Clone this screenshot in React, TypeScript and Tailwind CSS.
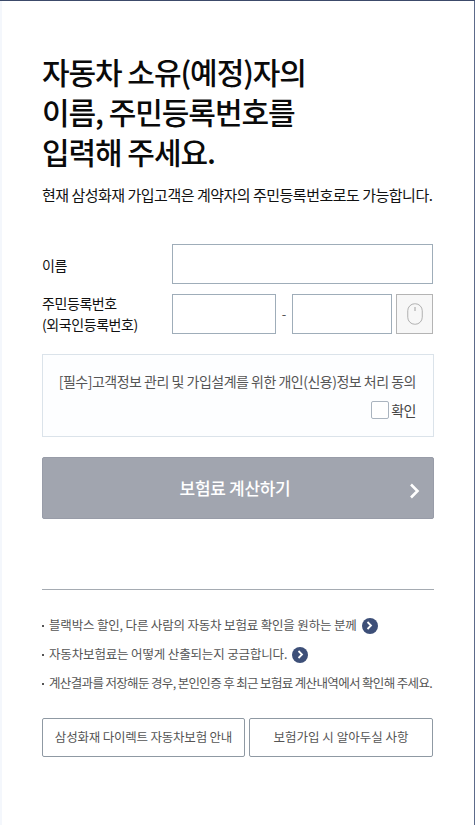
const notes = [
  { text: '블랙박스 할인, 다른 사람의 자동차 보험료 확인을 원하는 분께', link: true, cls: 'tracking-[-0.17px]' },
  { text: '자동차보험료는 어떻게 산출되는지 궁금합니다.', link: true, cls: 'tracking-[-0.15px]' },
  { text: '계산결과를 저장해둔 경우, 본인인증 후 최근 보험료 계산내역에서 확인해 주세요.', link: false, cls: 'tracking-[-0.65px]' },
];

const App = () => {
  return (
    <div className="w-[475px] h-[825px] overflow-hidden bg-[#f4f7fc] pl-[2px] border-t border-[#3c4a6a] font-['Noto_Sans_CJK_KR','Noto_Sans',sans-serif]">
      <div className="h-full bg-white border-r border-[#5c6a8a] px-[40px] pt-[50px]">
        {/* 제목 */}
        <h1 className="text-[30px] leading-[40px] font-medium tracking-[-1.05px] text-[#0a0a0a]">
          자동차 소유(예정)자의<br />이름, 주민등록번호를<br />입력해 주세요.
        </h1>
        <p className="mt-[12px] text-[15px] leading-[24px] tracking-[-0.5px] text-[#111] whitespace-nowrap">
          현재 삼성화재 가입고객은 계약자의 주민등록번호로도 가능합니다.
        </p>

        {/* 입력 폼 */}
        <div className="mt-[37px] flex items-center h-[40px]">
          <label className="w-[130px] mt-[2px] text-[14px] tracking-[-0.3px] text-[#111]">이름</label>
          <input className="w-[261px] h-[40px] border border-[#9fadb9] bg-white" />
        </div>
        <div className="mt-[10px] flex items-center h-[40px]">
          <label className="w-[130px] -mt-[1px] text-[14px] leading-[21px] tracking-[-0.42px] text-[#111] whitespace-nowrap">
            주민등록번호<br />(외국인등록번호)
          </label>
          <input className="w-[104px] h-[40px] border border-[#9fadb9] bg-white" />
          <span className="w-[16px] text-center text-[13px] text-[#555]">-</span>
          <input className="w-[100px] h-[40px] border border-[#9fadb9] bg-white" />
          <button className="ml-[4px] w-[37px] h-[40px] border border-[#b4b4b4] bg-[#f7f7f7] flex items-center justify-center">
            <svg width="16" height="22" viewBox="0 0 16 22" fill="none">
              <rect x="0.75" y="0.75" width="14.5" height="20.5" rx="7" stroke="#b0b0b0" strokeWidth="1" />
              <path d="M8 4v4" stroke="#a0a0a0" strokeWidth="1" />
            </svg>
          </button>
        </div>

        {/* 동의 */}
        <div className="mt-[20px] w-[392px] h-[83px] border border-[#dbe3ea] bg-[#fdfeff] pr-[17px] pt-[14px] flex flex-col items-end">
          <p className="text-[14px] leading-[24px] tracking-[-0.5px] text-[#555] whitespace-nowrap">
            [필수]고객정보 관리 및 가입설계를 위한 개인(신용)정보 처리 동의
          </p>
          <label className="mt-[7px] flex items-center gap-[2px] text-[14px] leading-[20px] tracking-[-0.5px] text-[#444]">
            <input type="checkbox" className="appearance-none w-[18px] h-[18px] rounded-[2px] border border-[#aab4bf] bg-white" />
            확인
          </label>
        </div>

        {/* 계산 버튼 */}
        <button className="mt-[20px] relative w-[392px] h-[62px] rounded-[2px] border border-[#989ca8] bg-[#a1a5af] pr-[6px] text-white text-[17px] font-medium tracking-[-0.3px] flex items-center justify-center">
          보험료 계산하기
          <svg width="11" height="16" viewBox="0 0 11 16" fill="none" className="absolute right-[13px] top-[25px]">
            <path d="M2 1.5 L8.5 8 L2 14.5" stroke="#fff" strokeWidth="2.6" />
          </svg>
        </button>

        <div className="mt-[70px] w-[392px] h-px bg-[#a5abb2]" />

        {/* 안내 */}
        <ul className="mt-[25px] w-[392px] space-y-[8px]">
          {notes.map((n) => (
            <li key={n.text} className={`flex items-center h-[21px] text-[12.5px] text-[#555] whitespace-nowrap ${n.cls}`}>
              <span className="shrink-0 w-[2px] h-[2px] mr-[5px] bg-[#555]" />
              {n.text}
              {n.link && (
                <span className="ml-[5px] w-[16px] h-[16px] rounded-full bg-[#3d4f78] flex items-center justify-center">
                  <svg width="7" height="9" viewBox="0 0 7 9" fill="none">
                    <path d="M1.5 1 L5 4.5 L1.5 8" stroke="#fff" strokeWidth="1.8" />
                  </svg>
                </span>
              )}
            </li>
          ))}
        </ul>

        <div className="mt-[24px] w-[391px] flex gap-[4px]">
          <button className="w-[203px] h-[39px] border border-[#8f99a3] rounded-[2px] bg-white text-[12.5px] tracking-[-0.2px] text-[#555] whitespace-nowrap">
            삼성화재 다이렉트 자동차보험 안내
          </button>
          <button className="w-[184px] h-[39px] border border-[#8f99a3] rounded-[2px] bg-white text-[12.5px] tracking-[0px] text-[#555] whitespace-nowrap">
            보험가입 시 알아두실 사항
          </button>
        </div>
      </div>
    </div>
  );
};

export default App;
